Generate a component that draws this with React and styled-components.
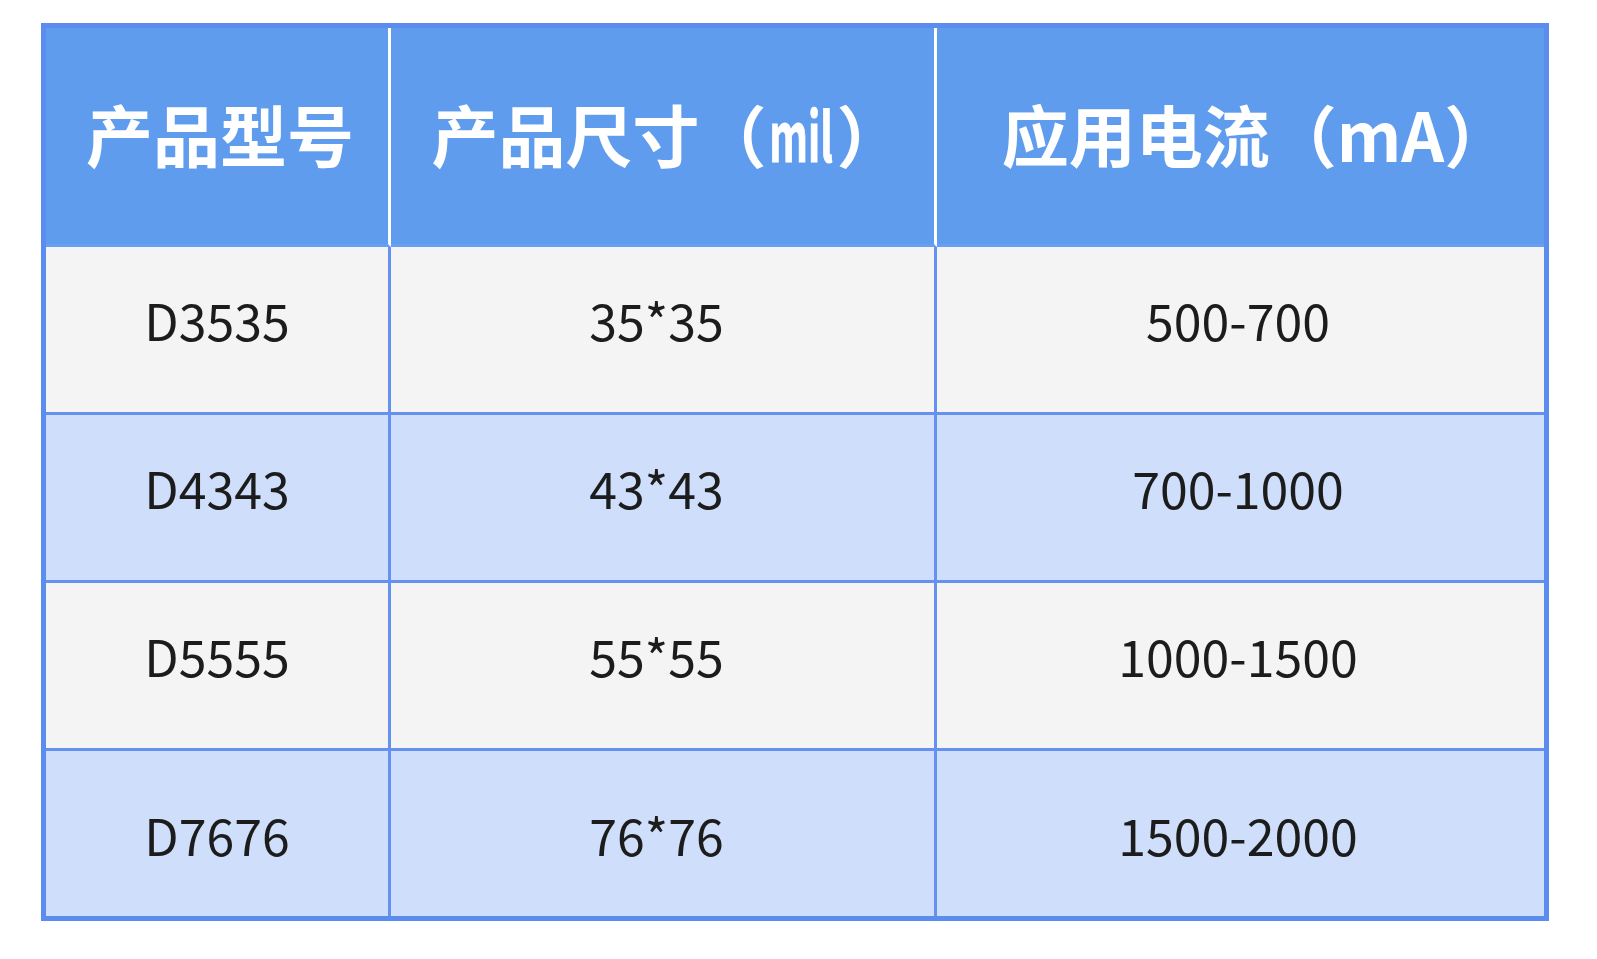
import React from 'react';
import styled, { createGlobalStyle } from 'styled-components';

const GlobalStyle = createGlobalStyle`
  html, body {
    margin: 0;
    padding: 0;
    background: #ffffff;
  }
  body {
    font-family: "Noto Sans CJK SC", "Noto Sans", sans-serif;
  }
`;

const Page = styled.div`
  width: 1597px;
  height: 959px;
  padding: 23px 0 0 41px;
  box-sizing: border-box;
`;

const Table = styled.table`
  width: 1508px;
  border-collapse: separate;
  border-spacing: 0;
  border: 5px solid #5b8def;
  table-layout: fixed;
`;

const HeadRow = styled.tr`
  height: 219px;
  background: #5f9cee;
`;

const HeadCell = styled.th`
  padding: 0 0 8px ${(p) => p.$indent || 0}px;
  color: #ffffff;
  font-family: "Noto Sans CJK SC", sans-serif;
  font-weight: 700;
  font-size: 67px;
  line-height: 1;
  text-align: center;
  vertical-align: middle;
  border-bottom: 3px solid #6a9ef5;
  border-right: 3px solid #ffffff;
  &:last-child {
    border-right: none;
  }
`;

// the unit in the reference is set much narrower than the CJK font's latin
const Unit = styled.span`
  display: inline-block;
  transform: scaleX(0.6);
  margin: 0 -18px;
  -webkit-text-stroke: 1px #ffffff;
`;

const Row = styled.tr`
  height: ${(p) => (p.$first ? '165px' : '168px')};
  background: ${(p) => (p.$alt ? '#cfdefa' : '#f4f4f4')};
`;

const Cell = styled.td`
  padding: 0 ${(p) => p.$pull || 0}px ${(p) => (p.$lift ? '22px' : '0')} 0;
  color: #1c1c1c;
  font-family: "Noto Sans CJK SC", sans-serif;
  font-weight: 400;
  font-size: 50px;
  line-height: 1;
  text-align: center;
  vertical-align: middle;
  border-top: ${(p) => (p.$first ? 'none' : '3px solid #6592f0')};
  border-right: 3px solid #6592f0;
  &:last-child {
    border-right: none;
  }
`;

const rows = [
  ['D3535', '35*35', '500-700'],
  ['D4343', '43*43', '700-1000'],
  ['D5555', '55*55', '1000-1500'],
  ['D7676', '76*76', '1500-2000'],
];

const pulls = [0, 12, 5];

export default function App() {
  return (
    <Page>
      <GlobalStyle />
      <Table>
        <colgroup>
          <col style={{ width: 345 }} />
          <col style={{ width: 546 }} />
          <col />
        </colgroup>
        <thead>
          <HeadRow>
            <HeadCell $indent={6}>产品型号</HeadCell>
            <HeadCell $indent={10}>
              产品尺寸（<Unit>mil</Unit>）
            </HeadCell>
            <HeadCell $indent={32}>应用电流（mA）</HeadCell>
          </HeadRow>
        </thead>
        <tbody>
          {rows.map((r, i) => (
            <Row key={r[0]} $alt={i % 2 === 1} $first={i === 0}>
              {r.map((c, j) => (
                <Cell key={c} $first={i === 0} $lift={i < 3} $pull={pulls[j]}>
                  {c}
                </Cell>
              ))}
            </Row>
          ))}
        </tbody>
      </Table>
    </Page>
  );
}
